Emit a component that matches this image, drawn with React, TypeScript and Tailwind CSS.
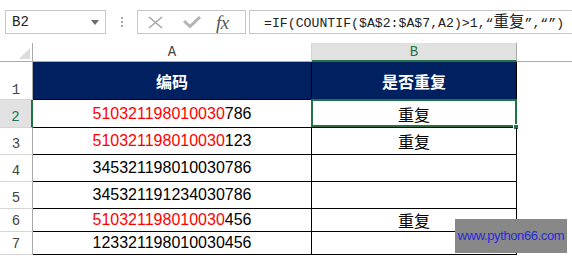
import React from "react";

/* ── Excel-like sheet: duplicate check with COUNTIF ─── */

const rows = [
  { n: 2, red: "510321198010030", rest: "786", dup: true, h: "h-[28px]", selected: true },
  { n: 3, red: "510321198010030", rest: "123", dup: true, h: "h-[27px]", selected: false },
  { n: 4, red: "", rest: "345321198010030786", dup: false, h: "h-[27px]", selected: false },
  { n: 5, red: "", rest: "345321191234030786", dup: false, h: "h-[27px]", selected: false },
  { n: 6, red: "510321198010030", rest: "456", dup: true, h: "h-[23px]", selected: false },
  { n: 7, red: "", rest: "123321198010030456", dup: false, h: "h-[23px]", selected: false },
];

function Toolbar() {
  return (
    <div className="flex h-[43px] items-start bg-white pt-[10px]">
      {/* name box */}
      <div className="ml-[5px] flex h-[24px] w-[101px] items-center justify-between border border-[#c6c6c6] pl-[6px] pr-[6px]">
        <span className="font-['Liberation_Mono',monospace] text-[14px] leading-none text-[#222]">B2</span>
        <svg width="8" height="5" viewBox="0 0 8 5">
          <polygon points="0,0 8,0 4,5" fill="#6b6b6b" />
        </svg>
      </div>

      {/* grip dots */}
      <div className="ml-[15px] flex h-[24px] w-[2px] flex-col items-center justify-center gap-[2px]">
        <div className="h-[2px] w-[2px] bg-[#a6a6a6]" />
        <div className="h-[2px] w-[2px] bg-[#a6a6a6]" />
        <div className="h-[2px] w-[2px] bg-[#a6a6a6]" />
      </div>

      {/* cancel / enter / fx */}
      <div className="ml-[14px] flex h-[24px] w-[109px] items-center border border-[#c6c6c6] pl-[10px]">
        <svg width="15" height="13" viewBox="0 0 15 13">
          <path d="M1 1 L14 12 M14 1 L1 12" stroke="#a6a6a6" strokeWidth="1.6" fill="none" />
        </svg>
        <svg className="ml-[20px]" width="18" height="12" viewBox="0 0 18 12">
          <polyline points="1,5 7,10.5 17,1" stroke="#b4b4b4" strokeWidth="3" fill="none" />
        </svg>
        <span className="ml-[15px] font-['Liberation_Serif',serif] text-[19px] italic leading-none tracking-[-0.5px] text-[#555]">
          fx
        </span>
      </div>

      {/* formula */}
      <div className="ml-[3px] flex h-[24px] min-w-0 flex-1 items-center whitespace-nowrap border border-r-0 border-[#c6c6c6] pl-[14px]">
        <span className="font-['Liberation_Mono',monospace] text-[13.2px] leading-[16px] text-[#222]">
          =IF(COUNTIF($A$2:$A$7,A2)&gt;1,“
          <span className="font-['Noto_Sans_CJK_SC',sans-serif] text-[15.5px] leading-[16px]">重复</span>
          ”,“”)
        </span>
      </div>
    </div>
  );
}

function ColumnHeaders() {
  return (
    <div className="grid h-[19px] grid-cols-[33px_279px_205px_1fr] font-['Liberation_Mono',monospace] text-[14px] leading-none">
      <div className="relative border-r border-b border-r-[#ababab] border-b-[#ababab] bg-white">
        <svg className="absolute right-[2px] bottom-[2px]" width="11" height="11" viewBox="0 0 11 11">
          <polygon points="11,0 11,11 0,11" fill="#dcdcdc" />
        </svg>
      </div>
      <div className="flex items-center justify-center border-r border-b border-r-[#d4d4d4] border-b-[#ababab] bg-white text-[#444]">
        A
      </div>
      <div className="flex items-center justify-center border-r border-b-2 border-r-[#ababab] border-b-[#217346] bg-[#e1e1e1] text-[#217346]">
        B
      </div>
      <div className="border-b border-b-[#ababab]" />
    </div>
  );
}

function HeaderRow() {
  return (
    <div className="grid h-[38px] grid-cols-[33px_279px_205px_1fr]">
      <div className="flex items-end justify-center border-r border-b border-r-[#ababab] border-b-[#d4d4d4] pb-[2px] font-['Liberation_Mono',monospace] text-[14px] leading-none text-[#444]">
        1
      </div>
      <div className="flex items-center justify-center border-r border-b border-black bg-[#002060] font-['Noto_Sans_CJK_SC',sans-serif] text-[16px] font-bold text-white">
        编码
      </div>
      <div className="flex items-center justify-center border-r border-b border-black bg-[#002060] font-['Noto_Sans_CJK_SC',sans-serif] text-[16px] font-bold text-white">
        是否重复
      </div>
      <div />
    </div>
  );
}

export default function App() {
  return (
    <div className="relative h-[258px] w-[572px] overflow-hidden bg-white">
      <Toolbar />
      <ColumnHeaders />
      <HeaderRow />

      {rows.map((r) => (
        <div key={r.n} className={`grid grid-cols-[33px_279px_205px_1fr] ${r.h}`}>
          <div
            className={
              r.selected
                ? "flex items-end justify-center border-r-2 border-b border-r-[#217346] border-b-[#d4d4d4] bg-[#e1e1e1] pb-[3px] font-['Liberation_Mono',monospace] text-[14px] leading-none text-[#217346]"
                : "flex items-end justify-center border-r border-b border-r-[#ababab] border-b-[#d4d4d4] pb-[3px] font-['Liberation_Mono',monospace] text-[14px] leading-none text-[#444]"
            }
          >
            {r.n}
          </div>
          <div className="flex items-center justify-center border-r border-b border-black font-['Liberation_Sans',sans-serif] text-[16px] leading-none text-black">
            <span className="text-[#ff0000]">{r.red}</span>
            {r.rest}
          </div>
          <div className="relative flex items-center justify-center border-r border-b border-black font-['Noto_Sans_CJK_SC',sans-serif] text-[16px] leading-none text-black">
            {r.dup && "重复"}
            {r.selected && (
              <>
                <div className="absolute -top-[1px] -left-[1px] -right-[1px] bottom-0 border-2 border-[#217346]" />
                <div className="absolute -right-[3px] -bottom-[3px] h-[6px] w-[6px] border border-white bg-[#217346]" />
              </>
            )}
          </div>
          <div />
        </div>
      ))}

      {/* watermark */}
      <div className="absolute left-[455px] top-[219px] flex h-[34px] w-[112px] items-center justify-center bg-[#888888] font-['Liberation_Sans',sans-serif] text-[13px] tracking-[-0.4px] text-[#2a2ade]">
        www.python66.com
      </div>
    </div>
  );
}
